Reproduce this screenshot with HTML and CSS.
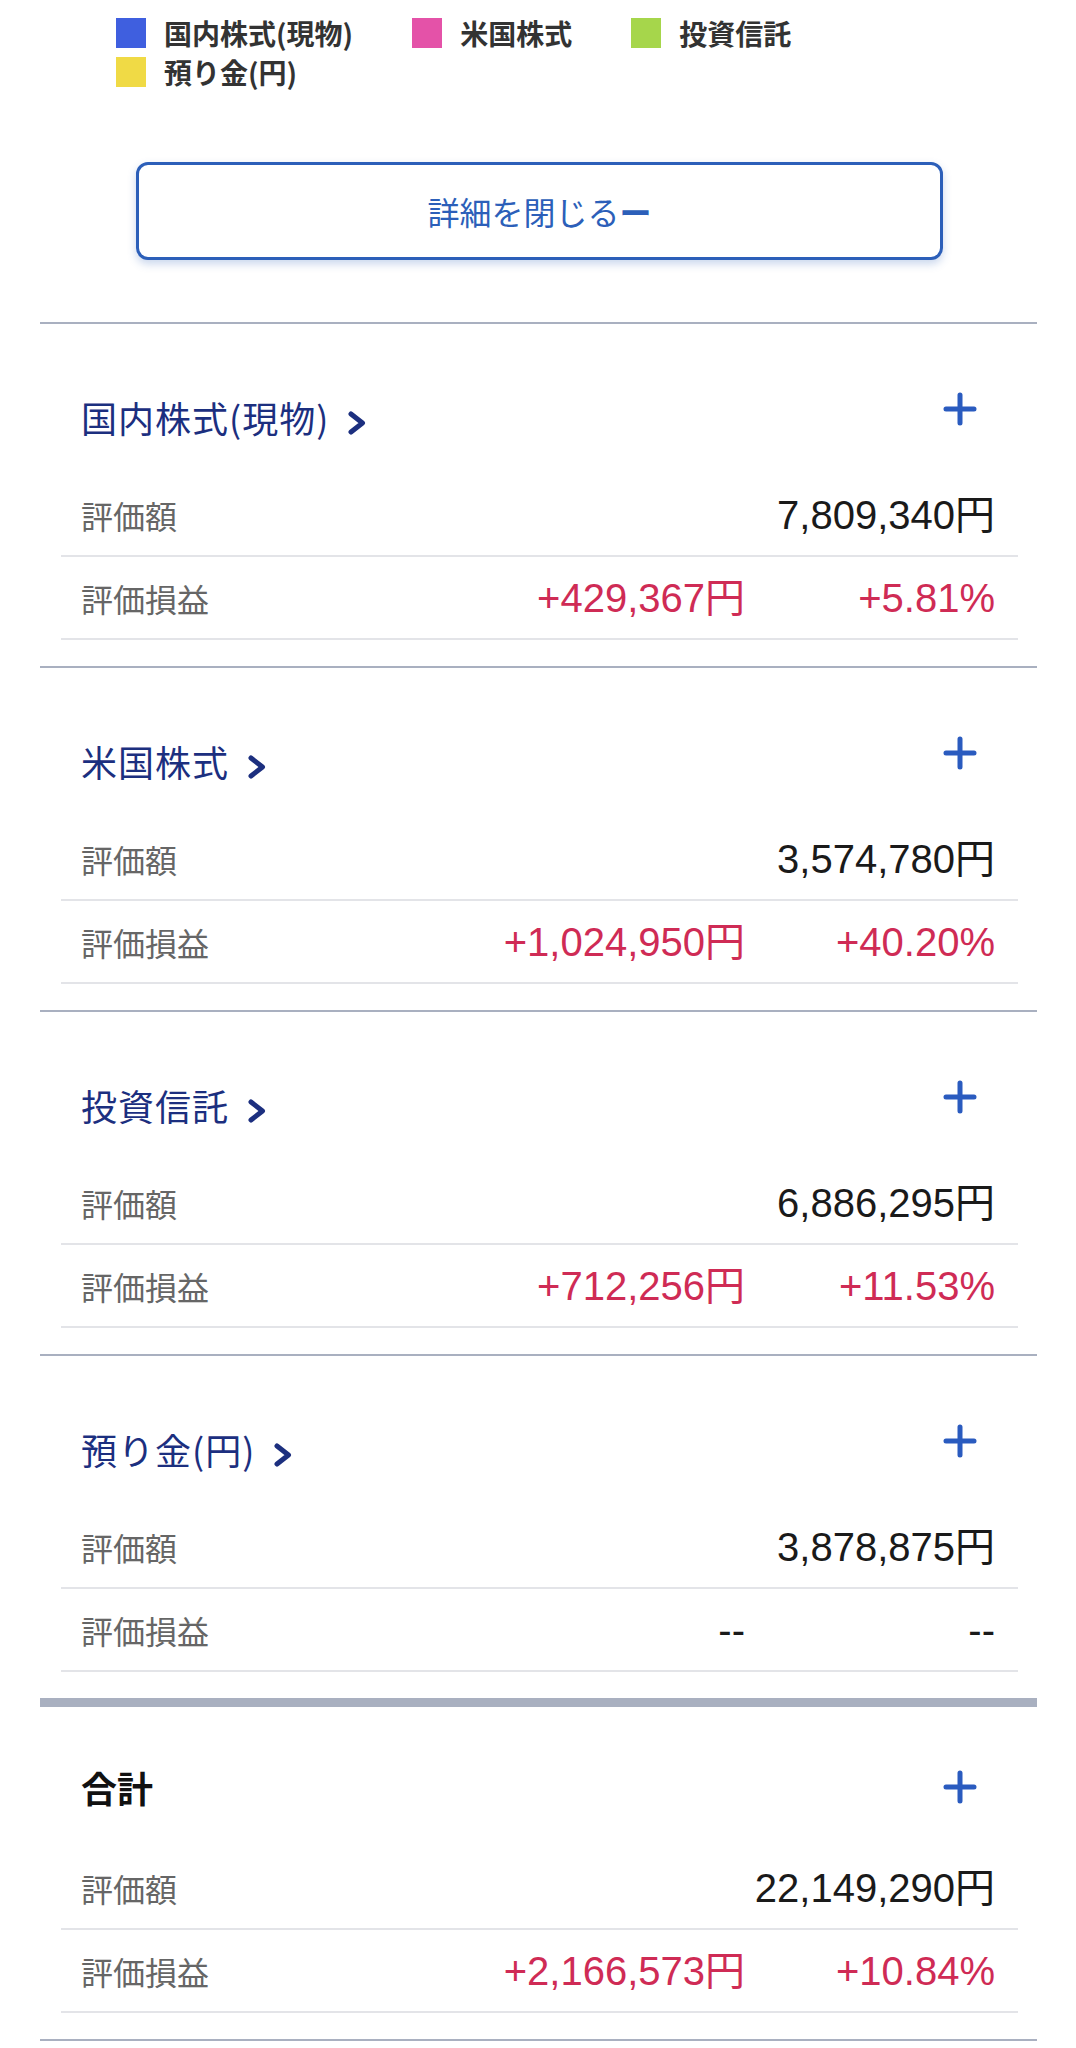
FILE: index.html
```html
<!DOCTYPE html>
<html lang="ja">
<head>
    <meta charset="utf-8">
    <title>資産残高</title>
    <link rel="stylesheet" href="styles.css">
</head>
<body>
    <ul class="legend">
        <li><span class="swatch swatch-jp"></span>国内株式(現物)</li>
        <li><span class="swatch swatch-us"></span>米国株式</li>
        <li><span class="swatch swatch-fund"></span>投資信託</li>
        <li><span class="swatch swatch-cash"></span>預り金(円)</li>
    </ul>

    <button class="toggle">詳細を閉じる<b>ー</b></button>

    <div class="asset-list">
        <section class="asset">
            <div class="asset-head">
                <a class="asset-title" href="#">国内株式(現物)
                    <svg class="chevron" viewBox="0 0 20 24"><polyline points="4,3 15.5,12 4,21"/></svg>
                </a>
                <svg class="plus" viewBox="0 0 34 34"><path d="M17 3V31M3 17H31"/></svg>
            </div>
            <div class="asset-row">
                <span class="label">評価額</span>
                <span class="value">7,809,340円</span>
            </div>
            <div class="asset-row">
                <span class="label">評価損益</span>
                <span class="amount gain">+429,367円</span>
                <span class="pct gain">+5.81%</span>
            </div>
        </section>

        <section class="asset">
            <div class="asset-head">
                <a class="asset-title" href="#">米国株式
                    <svg class="chevron" viewBox="0 0 20 24"><polyline points="4,3 15.5,12 4,21"/></svg>
                </a>
                <svg class="plus" viewBox="0 0 34 34"><path d="M17 3V31M3 17H31"/></svg>
            </div>
            <div class="asset-row">
                <span class="label">評価額</span>
                <span class="value">3,574,780円</span>
            </div>
            <div class="asset-row">
                <span class="label">評価損益</span>
                <span class="amount gain">+1,024,950円</span>
                <span class="pct gain">+40.20%</span>
            </div>
        </section>

        <section class="asset">
            <div class="asset-head">
                <a class="asset-title" href="#">投資信託
                    <svg class="chevron" viewBox="0 0 20 24"><polyline points="4,3 15.5,12 4,21"/></svg>
                </a>
                <svg class="plus" viewBox="0 0 34 34"><path d="M17 3V31M3 17H31"/></svg>
            </div>
            <div class="asset-row">
                <span class="label">評価額</span>
                <span class="value">6,886,295円</span>
            </div>
            <div class="asset-row">
                <span class="label">評価損益</span>
                <span class="amount gain">+712,256円</span>
                <span class="pct gain">+11.53%</span>
            </div>
        </section>

        <section class="asset">
            <div class="asset-head">
                <a class="asset-title" href="#">預り金(円)
                    <svg class="chevron" viewBox="0 0 20 24"><polyline points="4,3 15.5,12 4,21"/></svg>
                </a>
                <svg class="plus" viewBox="0 0 34 34"><path d="M17 3V31M3 17H31"/></svg>
            </div>
            <div class="asset-row">
                <span class="label">評価額</span>
                <span class="value">3,878,875円</span>
            </div>
            <div class="asset-row">
                <span class="label">評価損益</span>
                <span class="amount">--</span>
                <span class="pct">--</span>
            </div>
        </section>

        <!-- 合計 -->
        <section class="asset total">
            <div class="asset-head">
                <span class="asset-title">合計</span>
                <svg class="plus" viewBox="0 0 34 34"><path d="M17 3V31M3 17H31"/></svg>
            </div>
            <div class="asset-row">
                <span class="label">評価額</span>
                <span class="value">22,149,290円</span>
            </div>
            <div class="asset-row">
                <span class="label">評価損益</span>
                <span class="amount gain">+2,166,573円</span>
                <span class="pct gain">+10.84%</span>
            </div>
        </section>
    </div>
</body>
</html>
```

FILE: styles.css
```css
body {
    margin: 0;
    background-color: #fff;
    font-family: "Noto Sans CJK JP", sans-serif;
    color: #222;
}

/* chart legend */
.legend {
    list-style: none;
    margin: 0;
    padding: 13px 116px 0;
    display: flex;
    flex-wrap: wrap;
    column-gap: 59px;
}

.legend li {
    display: flex;
    align-items: center;
    height: 39px;
    font-size: 28px;
    font-weight: 700;
    color: #333;
}

.swatch {
    width: 30px;
    height: 30px;
    margin-right: 18px;
}

.swatch-jp { background-color: #3f5fdf; }
.swatch-us { background-color: #e452a8; }
.swatch-fund { background-color: #a6d64b; }
.swatch-cash { background-color: #f0da45; }

.toggle {
    display: block;
    width: 807px;
    height: 98px;
    margin: 71px 0 62px 136px;
    background-color: #fff;
    border: 3px solid #2c5fb9;
    border-radius: 12px;
    box-shadow: 0 4px 8px rgba(44, 95, 185, 0.25);
    color: #2c5fb9;
    font-family: inherit;
    font-size: 32px;
    cursor: pointer;
}

.toggle b {
    font-weight: 700;
}

/* asset sections */
.asset-list {
    margin: 0 39px 0 40px;
    border-bottom: 2px solid #a9b0c0;
}

.asset {
    border-top: 2px solid #a9b0c0;
    padding-bottom: 26px;
}

.asset-head {
    display: flex;
    justify-content: space-between;
    align-items: flex-start;
    height: 150px;
    box-sizing: border-box;
    padding: 68px 60px 0 41px;
}

.asset-title {
    display: flex;
    align-items: center;
    margin-top: 1px;
    font-size: 36px;
    line-height: 48px;
    letter-spacing: 1px;
    color: #1c2f7f;
    text-decoration: none;
}

.chevron {
    width: 20px;
    height: 24px;
    margin: 12px 0 0 18px;
    fill: none;
    stroke: #1c2f7f;
    stroke-width: 5;
    stroke-linecap: round;
    stroke-linejoin: round;
}

.plus {
    width: 34px;
    height: 34px;
    fill: none;
    stroke: #2a5bbf;
    stroke-width: 5;
    stroke-linecap: round;
}

.asset-row {
    display: grid;
    grid-template-columns: 1fr auto 250px;
    align-items: center;
    height: 81px;
    margin: 0 19px 0 21px;
    padding: 0 23px 0 20px;
    border-bottom: 2px solid #e3e4e8;
}

.label {
    font-size: 32px;
    color: #666;
}

.value,
.amount,
.pct {
    text-align: right;
    font-family: "Liberation Sans", "Noto Sans CJK JP", sans-serif;
    font-size: 40px;
    line-height: 48px;
    color: #1a1a1a;
}

.value {
    grid-column: 2 / 4;
}

.gain {
    color: #cf2b55;
}

/* total block has a heavier rule */
.total {
    border-top-width: 9px;
}

.total .asset-head {
    height: 140px;
    padding-top: 63px;
}

.total .asset-title {
    margin-top: 0;
    line-height: 34px;
    letter-spacing: 0;
    font-weight: 700;
    color: #111;
}
```
